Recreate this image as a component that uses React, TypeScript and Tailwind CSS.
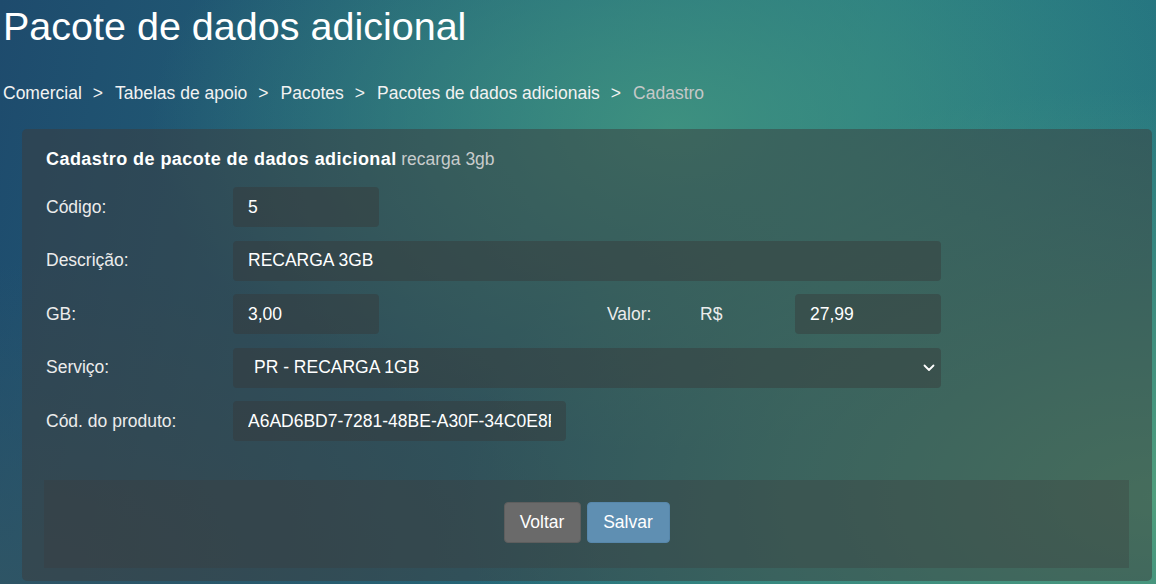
import React from "react";

const font = { fontFamily: '"Liberation Sans", Arial, sans-serif' };

function Field({ label, children }: { label: string; children: React.ReactNode }) {
  return (
    <div className="flex items-center h-10">
      <label className="w-[189px] shrink-0 pl-[2px] text-[17.5px] text-[#ececec]">{label}</label>
      {children}
    </div>
  );
}

const inputCls =
  "h-10 rounded-[4px] bg-[rgba(55,55,55,0.42)] px-[15px] text-[17.5px] text-white outline-none border-0";

export default function App() {
  return (
    <div
      style={font}
      className="relative w-[1156px] h-[584px] overflow-hidden text-white bg-[radial-gradient(ellipse_45%_55%_at_58%_22%,rgba(66,150,128,0.85)_0%,rgba(66,150,128,0)_100%),radial-gradient(ellipse_60%_70%_at_100%_85%,rgba(82,160,125,0.95)_0%,rgba(82,160,125,0)_100%),radial-gradient(ellipse_55%_55%_at_0%_100%,rgba(48,85,100,0.9)_0%,rgba(48,85,100,0)_100%),linear-gradient(100deg,#1e4b6d_0%,#236a7c_45%,#277a82_70%,#267580_100%)]"
    >
      <h1 className="ml-[3px] mt-[2px] text-[39.5px] leading-[48px]">Pacote de dados adicional</h1>
      <nav className="ml-[3px] mt-[31px] flex text-[17.5px] leading-6 text-[#f2f2f2]">
        <span>Comercial</span>
        <span className="pl-[11px] pr-[12px]">&gt;</span>
        <span>Tabelas de apoio</span>
        <span className="pl-[11px] pr-[12px]">&gt;</span>
        <span>Pacotes</span>
        <span className="pl-[11px] pr-[12px]">&gt;</span>
        <span>Pacotes de dados adicionais</span>
        <span className="pl-[11px] pr-[12px]">&gt;</span>
        <span className="text-[#c4c8c8]">Cadastro</span>
      </nav>

      <section className="ml-[22px] mt-6 w-[1130px] h-[452px] rounded-[5px] bg-[rgba(60,60,60,0.5)] px-[22px] pt-[18px]">
        <div className="pl-[2px] leading-6">
          <span className="font-bold text-[18px] tracking-[0.45px]">Cadastro de pacote de dados adicional</span>{" "}
          <span className="text-[17.5px] text-[#c8cccc]">recarga 3gb</span>
        </div>

        <div className="mt-[15px] flex flex-col gap-[13.5px]">
          <Field label="Código:">
            <input readOnly value="5" className={`${inputCls} w-[146px]`} />
          </Field>
          <Field label="Descrição:">
            <input readOnly value="RECARGA 3GB" className={`${inputCls} w-[708px]`} />
          </Field>
          <Field label="GB:">
            <input readOnly value="3,00" className={`${inputCls} w-[146px]`} />
            <span className="w-[228px]" />
            <span className="w-[93px] text-[17.5px] text-[#ececec]">Valor:</span>
            <span className="w-[95px] text-[17.5px] text-[#ececec]">R$</span>
            <input readOnly value="27,99" className={`${inputCls} w-[146px]`} />
          </Field>
          <Field label="Serviço:">
            <div className={`${inputCls} w-[708px] flex items-center justify-between pl-[21px] pr-[6px]`}>
              <span>PR - RECARGA 1GB</span>
              <svg width="12" height="8" viewBox="0 0 12 8" fill="none">
                <path d="M1.5 1.5 6 6l4.5-4.5" stroke="white" strokeWidth="1.8" strokeLinecap="round" strokeLinejoin="round" />
              </svg>
            </div>
          </Field>
          <Field label="Cód. do produto:">
            <input
              readOnly
              value="A6AD6BD7-7281-48BE-A30F-34C0E8F1B2A7"
              className={`${inputCls} w-[333px]`}
            />
          </Field>
        </div>

        <div className="mt-[39px] h-[88px] w-[1085px] bg-[rgba(60,60,60,0.32)] flex items-center justify-center gap-[6px] pb-[3px]">
          <button className="h-[41px] w-[77px] rounded-[4px] bg-[#6a6a6a] border border-[#5e5e5e] text-[17.5px] text-white">
            Voltar
          </button>
          <button className="h-[41px] w-[83px] rounded-[4px] bg-[#5f8fb2] border border-[#5787ab] text-[17.5px] text-white">
            Salvar
          </button>
        </div>
      </section>
    </div>
  );
}
